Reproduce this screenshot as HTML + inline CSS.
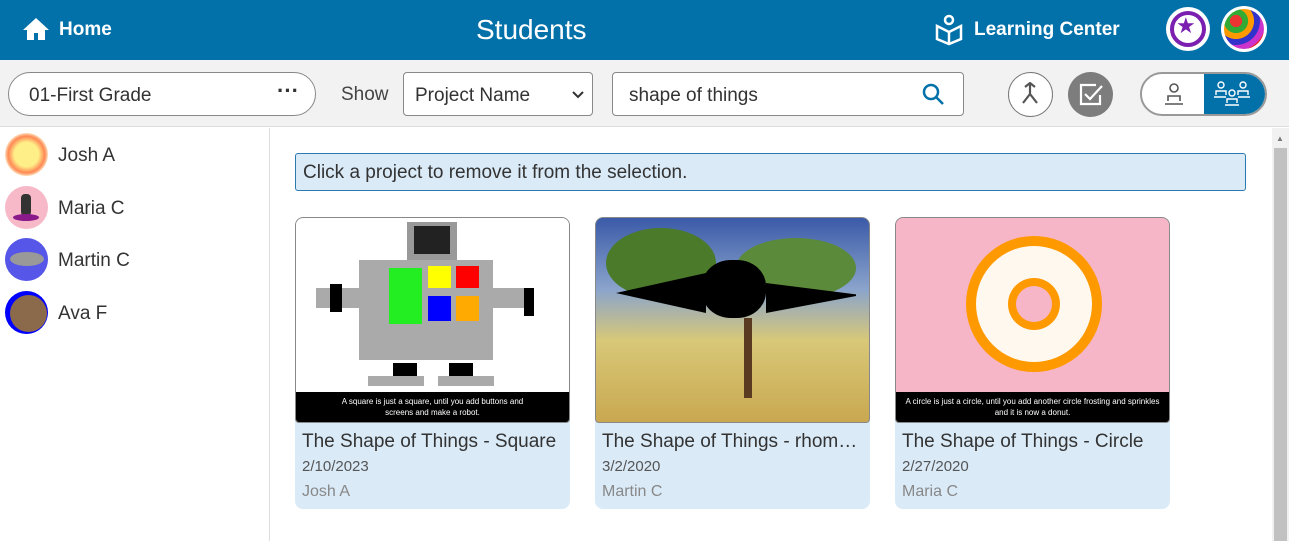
<!DOCTYPE html>
<html><head><meta charset="utf-8"><style>
*{box-sizing:border-box;margin:0;padding:0}
body{width:1289px;height:541px;overflow:hidden;font-family:"Liberation Sans",sans-serif;background:#fff;position:relative;color:#333}
.a{position:absolute}
.hdr{left:0;top:0;width:1289px;height:60px;background:#0271a9;color:#fff}
.tb{left:0;top:60px;width:1289px;height:67px;background:#f2f2f2;border-bottom:1px solid #ddd}
.box{background:#fff;border:1px solid #888;font-size:19px;color:#333}
.name{font-size:19px;color:#333;left:58px}
.av{left:5px;width:43px;height:43px;border-radius:50%}
.card{width:275px;height:292px;top:217px;background:#daeaf7;border-radius:8px;overflow:hidden}
.img{position:absolute;left:0;top:0;width:275px;height:206px;border:1px solid #888;border-radius:8px 8px 4px 4px;overflow:hidden}
.t{position:absolute;left:7px;top:214px;font-size:19px;color:#333;white-space:nowrap}
.d{position:absolute;left:7px;top:241px;font-size:15px;color:#555}
.n{position:absolute;left:7px;top:266px;font-size:16px;color:#888}
.cap{position:absolute;left:0;bottom:0;width:100%;height:30px;background:#000;color:#fff;font-size:8px;text-align:center;line-height:11px;padding-top:4px}
</style></head><body>
<div class="a hdr">
 <svg class="a" style="left:22px;top:17px" width="28" height="24" viewBox="0 0 28 24"><path d="M14 1L1 13h4v10h7v-7h4v7h7V13h4z" fill="#fff"/></svg>
 <div class="a" style="left:59px;top:19px;font-size:19px;font-weight:bold">Home</div>
 <div class="a" style="left:476px;top:14px;font-size:28px">Students</div>
 <svg class="a" style="left:934px;top:14px" width="30" height="32" viewBox="0 0 30 32" fill="none" stroke="#fff" stroke-width="2.5"><circle cx="15" cy="6" r="4"/><path d="M3 12l12 6 12-6v13l-12 5-12-5z"/><path d="M15 18v12"/></svg>
 <div class="a" style="left:974px;top:19px;font-size:19px;font-weight:bold">Learning Center</div>
 <div class="a" style="left:1166px;top:7px;width:44px;height:44px;border-radius:50%;background:#fff"></div>
 <div class="a" style="left:1170px;top:11px;width:36px;height:36px;border-radius:50%;background:#fff;border:4px solid #7a1fb0"></div>
 <div class="a" style="left:1176px;top:13px;font-size:22px;color:#7a1fb0">★</div>
 <div class="a" style="left:1221px;top:6px;width:46px;height:46px;border-radius:50%;background:#fff"></div>
 <div class="a" style="left:1224px;top:9px;width:40px;height:40px;border-radius:50%;background:radial-gradient(circle at 30% 30%,#e33 0 15%,#3a3 16% 30%,#f90 31% 45%,#33c 46% 60%,#c3c 61% 75%,#e22 76%)"></div>
</div>
<div class="a tb">
 <div class="a box" style="left:8px;top:12px;width:308px;height:44px;border-radius:22px;padding:12px 0 0 20px">01-First Grade<span class="a" style="left:268px;top:8px;font-size:22px;font-weight:bold;line-height:20px">···</span></div>
 <div class="a" style="left:341px;top:24px;font-size:19px;color:#444">Show</div>
 <div class="a box" style="left:403px;top:12px;width:190px;height:44px;border-radius:4px;padding:12px 0 0 11px">Project Name<svg class="a" style="left:168px;top:18px" width="12" height="8"><path d="M1 1l5 5 5-5" fill="none" stroke="#333" stroke-width="2"/></svg></div>
 <div class="a box" style="left:612px;top:12px;width:352px;height:44px;border-radius:4px;padding:12px 0 0 16px">shape of things</div>
 <svg class="a" style="left:921px;top:22px" width="24" height="24" viewBox="0 0 24 24" fill="none" stroke="#0271a9" stroke-width="2.5"><circle cx="10" cy="10" r="7"/><path d="M15 15l7 7"/></svg>
 <div class="a" style="left:1008px;top:12px;width:45px;height:45px;border-radius:50%;background:#fff;border:1px solid #777"></div>
 <svg class="a" style="left:1018px;top:22px" width="24" height="24" viewBox="0 0 24 24" fill="none" stroke="#555" stroke-width="2.2"><path d="M7 5l5-4 5 4M12 1v11L5 21M12 12l7 9"/></svg>
 <div class="a" style="left:1068px;top:12px;width:45px;height:45px;border-radius:50%;background:#7d7d7d"></div>
 <svg class="a" style="left:1078px;top:22px" width="26" height="26" viewBox="0 0 26 26" fill="none" stroke="#fff" stroke-width="2.2"><path d="M18 3H3v19h19v-9"/><path d="M7 12l5 5 12-13"/></svg>
 <div class="a" style="left:1140px;top:12px;width:127px;height:44px;border-radius:22px;border:2px solid #999;background:#fff;overflow:hidden"><div class="a" style="left:62px;top:0;width:63px;height:44px;background:#0271a9"></div></div>
 <svg class="a" style="left:1163px;top:22px" width="22" height="24" viewBox="0 0 22 24" fill="none" stroke="#555" stroke-width="1.6"><circle cx="11" cy="6" r="4"/><path d="M5 19v-5h12v5M2 22h18"/></svg>
 <svg class="a" style="left:1213px;top:20px" width="38" height="26" viewBox="0 0 38 26" fill="none" stroke="#fff" stroke-width="1.4"><circle cx="8" cy="5" r="3"/><circle cx="30" cy="5" r="3"/><circle cx="19" cy="13" r="3"/><path d="M3 15v-4h10v4M25 15v-4h10v4M14 23v-4h10v4M1 17h12M25 17h12M12 25h14"/></svg>
</div>
<div class="a" style="left:269px;top:128px;width:1px;height:413px;background:#ddd"></div>
<div class="a av" style="top:133px;background:radial-gradient(circle,#ffef88 40%,#f85 60%,#ffd 75%)"></div><div class="a name" style="top:145px">Josh A</div>
<div class="a av" style="top:186px;background:#f7b8c8"></div><div class="a" style="left:21px;top:194px;width:10px;height:22px;background:#333;border-radius:4px"></div><div class="a" style="left:13px;top:214px;width:26px;height:7px;background:#8a1a8a;border-radius:50%"></div><div class="a name" style="top:198px">Maria C</div>
<div class="a av" style="top:238px;background:#5656e8"></div><div class="a" style="left:10px;top:252px;width:34px;height:14px;background:#999;border-radius:50%"></div><div class="a name" style="top:250px">Martin C</div>
<div class="a av" style="top:291px;background:#00f"></div><div class="a" style="left:10px;top:295px;width:37px;height:37px;border-radius:50%;background:#8a6a4a"></div><div class="a name" style="top:303px">Ava F</div>
<div class="a" style="left:295px;top:153px;width:951px;height:38px;border:1px solid #2a7ab0;border-radius:3px;background:#daeaf7;font-size:19px;padding:8px 0 0 7px;color:#333">Click a project to remove it from the selection.</div>

<div class="a card" style="left:295px"><div class="img" style="background:#fff">
 <div class="a" style="left:111px;top:4px;width:50px;height:38px;background:#999"></div><div class="a" style="left:118px;top:8px;width:36px;height:28px;background:#222"></div>
 <div class="a" style="left:63px;top:42px;width:134px;height:100px;background:#aaa"></div>
 <div class="a" style="left:20px;top:70px;width:44px;height:20px;background:#aaa"></div><div class="a" style="left:34px;top:66px;width:12px;height:28px;background:#000"></div>
 <div class="a" style="left:197px;top:70px;width:34px;height:20px;background:#aaa"></div><div class="a" style="left:228px;top:70px;width:10px;height:28px;background:#000"></div>
 <div class="a" style="left:93px;top:50px;width:33px;height:56px;background:#2e2"></div>
 <div class="a" style="left:132px;top:48px;width:23px;height:22px;background:#ff0"></div><div class="a" style="left:160px;top:48px;width:23px;height:22px;background:#f00"></div>
 <div class="a" style="left:132px;top:78px;width:23px;height:25px;background:#00f"></div><div class="a" style="left:160px;top:78px;width:23px;height:25px;background:#fa0"></div>
 <div class="a" style="left:97px;top:145px;width:24px;height:14px;background:#000"></div><div class="a" style="left:153px;top:145px;width:24px;height:14px;background:#000"></div>
 <div class="a" style="left:72px;top:158px;width:56px;height:10px;background:#aaa"></div><div class="a" style="left:142px;top:158px;width:56px;height:10px;background:#aaa"></div>
 <div class="cap">A square is just a square, until you add buttons and<br>screens and make a robot.</div></div>
 <div class="t">The Shape of Things - Square</div><div class="d">2/10/2023</div><div class="n">Josh A</div></div>

<div class="a card" style="left:595px"><div class="img" style="background:linear-gradient(#3b5aa8 0,#8aa4cc 35%,#d8c878 60%,#c9a850 100%)">
 <div class="a" style="left:10px;top:10px;width:110px;height:70px;border-radius:50%;background:#4a7a2a"></div>
 <div class="a" style="left:140px;top:20px;width:120px;height:60px;border-radius:50%;background:#5a8a3a"></div>
 <div class="a" style="left:106px;top:42px;width:64px;height:58px;border-radius:45%;background:#000"></div>
 <svg class="a" style="left:20px;top:55px" width="240" height="50"><path d="M0 20L90 0V40ZM150 10L245 22L150 40Z" fill="#000"/></svg>
 <div class="a" style="left:148px;top:100px;width:8px;height:80px;background:#5a3a20"></div>
 </div>
 <div class="t">The Shape of Things - rhom…</div><div class="d">3/2/2020</div><div class="n">Martin C</div></div>

<div class="a card" style="left:895px"><div class="img" style="background:#f6b6c8">
 <div class="a" style="left:70px;top:18px;width:136px;height:136px;border-radius:50%;background:#f90"></div>
 <div class="a" style="left:80px;top:28px;width:116px;height:116px;border-radius:50%;background:#fff8ee"></div>
 <div class="a" style="left:112px;top:60px;width:52px;height:52px;border-radius:50%;background:#f90"></div>
 <div class="a" style="left:120px;top:68px;width:36px;height:36px;border-radius:50%;background:#f6b6c8"></div>
 <div class="cap">A circle is just a circle, until you add another circle frosting and sprinkles<br>and it is now a donut.</div></div>
 <div class="t">The Shape of Things - Circle</div><div class="d">2/27/2020</div><div class="n">Maria C</div></div>

<div class="a" style="left:1272px;top:128px;width:17px;height:413px;background:#f1f1f1"></div>
<div class="a" style="left:1274px;top:148px;width:13px;height:393px;background:#c1c1c1"></div>
<div class="a" style="left:1276px;top:134px;font-size:8px;color:#777">▲</div>
</body></html>
